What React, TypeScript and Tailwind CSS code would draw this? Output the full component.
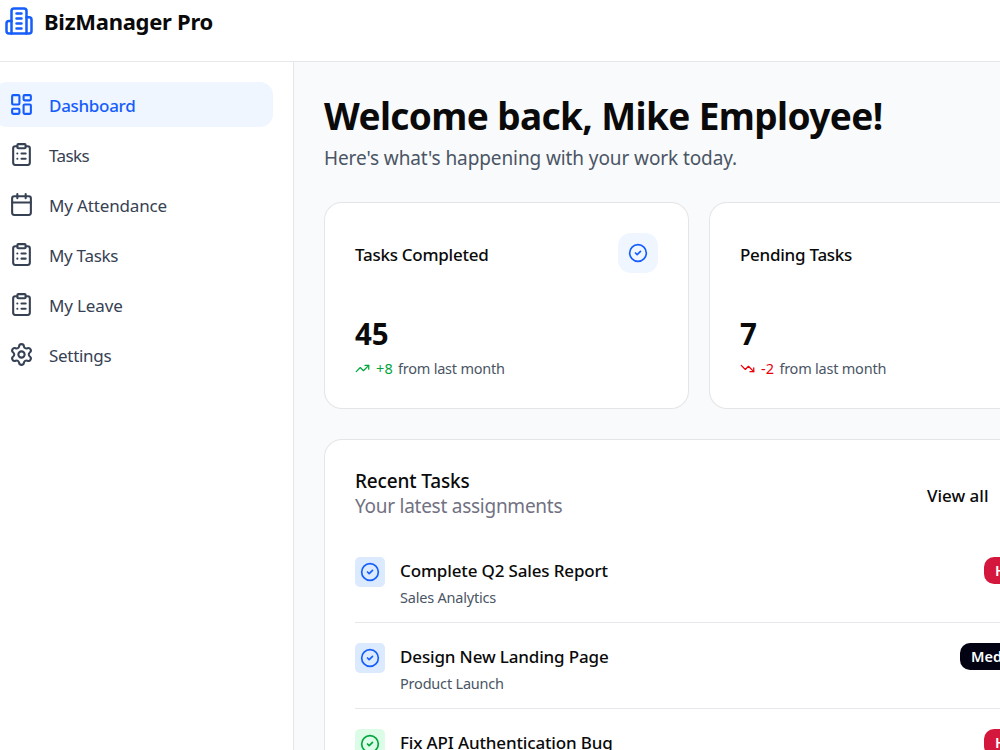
import { Calendar, CircleCheck, ClipboardList, LayoutDashboard, Settings, TrendingDown, TrendingUp } from "lucide-react";

const navItems = [
  { label: "Dashboard", icon: LayoutDashboard, active: true, tracking: "tracking-[-0.3px]" },
  { label: "Tasks", icon: ClipboardList, active: false, tracking: "tracking-[-0.6px]" },
  { label: "My Attendance", icon: Calendar, active: false, tracking: "tracking-[-0.15px]" },
  { label: "My Tasks", icon: ClipboardList, active: false, tracking: "tracking-[-0.3px]" },
  { label: "My Leave", icon: ClipboardList, active: false, tracking: "tracking-[-0.15px]" },
  { label: "Settings", icon: Settings, active: false, tracking: "tracking-[-0.3px]" },
];

const tasks = [
  { title: "Complete Q2 Sales Report", project: "Sales Analytics", priority: "High", done: false },
  { title: "Design New Landing Page", project: "Product Launch", priority: "Medium", done: false },
  { title: "Fix API Authentication Bug", project: "Platform", priority: "High", done: true },
];

function BuildingIcon() {
  return (
    <svg
      className="size-[30px] shrink-0 text-[#155dfc]"
      viewBox="0 0 24 24"
      fill="none"
      stroke="currentColor"
      strokeWidth="2"
      strokeLinecap="round"
      strokeLinejoin="round"
    >
      <path d="M6 22V4a2 2 0 0 1 2-2h8a2 2 0 0 1 2 2v18Z" />
      <path d="M6 12H4a2 2 0 0 0-2 2v6a2 2 0 0 0 2 2h2" />
      <path d="M18 9h2a2 2 0 0 1 2 2v9a2 2 0 0 1-2 2h-2" />
      <path d="M10 6h4M10 10h4M10 14h4M10 18h4" />
    </svg>
  );
}

function Header() {
  return (
    <header className="flex h-[62px] shrink-0 items-start gap-2.5 border-b border-[#e5e7eb] bg-white pt-1.5 pl-1">
      <BuildingIcon />
      <span className="text-[22px] leading-[31px] font-bold tracking-[-0.27px]">BizManager Pro</span>
    </header>
  );
}

function Sidebar() {
  return (
    <aside className="w-[294px] shrink-0 border-r border-[#e5e7eb] bg-white pt-5 pr-5">
      <nav className="-ml-1.5 flex flex-col gap-[5px]">
        {navItems.map(({ label, icon: Icon, active, tracking }) => (
          <a
            key={label}
            className={`flex h-[45px] items-center gap-[15px] rounded-[13px] pl-[15px] text-[17px] ${tracking} ${
              active ? "bg-[#eff6ff] font-medium text-[#155dfc]" : "text-[#364153]"
            }`}
          >
            <Icon className="size-[25px] shrink-0" />
            <span className="pt-0.5">{label}</span>
          </a>
        ))}
      </nav>
    </aside>
  );
}

interface StatCardProps {
  title: string;
  value: string;
  change: string;
  up: boolean;
}

function StatCard({ title, value, change, up }: StatCardProps) {
  const Trend = up ? TrendingUp : TrendingDown;
  return (
    <div className="h-[207px] rounded-[18px] border border-black/10 bg-white p-[30px]">
      <div className="flex h-10 items-center justify-between">
        <h3 className="pt-[3px] text-[17px] font-medium tracking-[-0.26px]">{title}</h3>
        <span className="flex size-10 items-center justify-center rounded-[13px] bg-[#eff6ff] text-[#155dfc]">
          <CircleCheck className="size-5" />
        </span>
      </div>
      <div className="mt-[41px] text-[29.5px] leading-10 font-bold">{value}</div>
      <div className="mt-[5px] flex h-5 items-center text-[14.5px] tracking-[-0.22px] text-[#4a5565]">
        <Trend className={`mr-1.5 -mt-0.5 size-[15px] ${up ? "text-[#00a63e]" : "text-[#e7000b]"}`} />
        <span className={`tracking-[0.2px] ${up ? "text-[#00a63e]" : "text-[#e7000b]"}`}>{change}</span>
        <span className="ml-[5px]">from last month</span>
      </div>
    </div>
  );
}

function RecentTasks() {
  return (
    <section className="mt-[30px] h-[500px] rounded-[18px] border border-black/10 bg-white px-[30px] pt-[29px]">
      <div className="flex items-center justify-between">
        <div>
          <h2 className="text-[19px] leading-[25px] font-medium tracking-[-0.15px]">Recent Tasks</h2>
          <p className="text-[19px] leading-[25px] tracking-[-0.26px] text-[#717182]">Your latest assignments</p>
        </div>
        <button className="w-[116px] pt-[3px] text-left text-[17px] font-medium tracking-normal">View all</button>
      </div>
      <ul className="mt-[18px]">
        {tasks.map((task) => (
          <li key={task.title} className="flex h-[86px] items-start border-b border-[#e5e7eb] pt-5">
            <span
              className={`flex size-[30px] items-center justify-center rounded-[5px] ${
                task.done ? "bg-[#dcfce7] text-[#00a63e]" : "bg-[#dbeafe] text-[#155dfc]"
              }`}
            >
              <CircleCheck className="size-5" />
            </span>
            <div className="ml-[15px] flex-1">
              <h4 className="text-[17px] leading-[27px] font-medium tracking-[-0.15px]">{task.title}</h4>
              <p className="mt-px text-[14.5px] leading-[25px] tracking-[-0.2px] text-[#4a5565]">{task.project}</p>
            </div>
            <span
              className={`flex h-[27px] items-center rounded-[10px] pl-[11px] text-[14.5px] font-semibold text-white ${
                task.priority === "High" ? "w-[59px] bg-[#d4183d]" : "w-[83px] bg-[#030213]"
              }`}
            >
              {task.priority}
            </span>
          </li>
        ))}
      </ul>
    </section>
  );
}

export default function App() {
  return (
    <div className="flex h-[750px] w-[1000px] flex-col overflow-hidden bg-[#f9fafb] font-['Noto_Sans','Open_Sans',sans-serif] text-[#0a0a0a]">
      <Header />
      <div className="flex min-h-0 flex-1">
        <Sidebar />
        <main className="w-[780px] shrink-0 pt-[29px] pl-[30px]">
          <h1 className="text-[37px] leading-[50px] font-bold tracking-[-0.62px] whitespace-nowrap">
            Welcome back, Mike Employee!
          </h1>
          <p className="mt-0.5 text-[19px] leading-[30px] tracking-[-0.1px] text-[#4a5565]">
            Here's what's happening with your work today.
          </p>
          <div className="mt-[29px] grid grid-cols-2 gap-5">
            <StatCard title="Tasks Completed" value="45" change="+8" up />
            <StatCard title="Pending Tasks" value="7" change="-2" up={false} />
          </div>
          <RecentTasks />
        </main>
      </div>
    </div>
  );
}
